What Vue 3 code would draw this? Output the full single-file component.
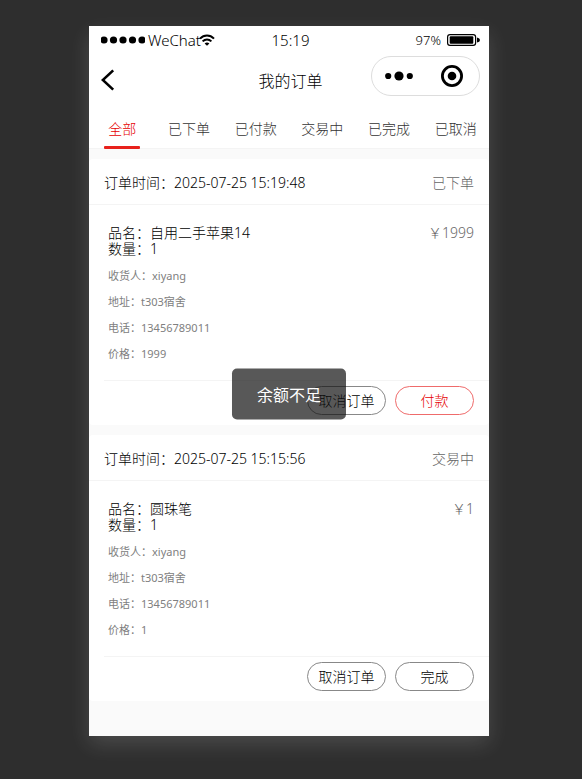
<script setup>
import { ref } from 'vue'

const tabs = ['全部', '已下单', '已付款', '交易中', '已完成', '已取消']
const active = ref(0)

const orders = [
  {
    time: '2025-07-25 15:19:48',
    status: '已下单',
    name: '自用二手苹果14',
    count: 1,
    price: '1999',
    receiver: 'xiyang',
    address: 't303宿舍',
    phone: '13456789011',
    action: '付款',
    primary: true
  },
  {
    time: '2025-07-25 15:15:56',
    status: '交易中',
    name: '圆珠笔',
    count: 1,
    price: '1',
    receiver: 'xiyang',
    address: 't303宿舍',
    phone: '13456789011',
    action: '完成',
    primary: false
  }
]
</script>

<template>
  <div class="stage">
    <main class="phone">
      <div class="status-bar">
        <div class="carrier">
          <svg class="signal" width="44" height="8" viewBox="0 0 44 8" aria-hidden="true">
            <circle cx="3" cy="4" r="3.6" />
            <circle cx="12.5" cy="4" r="3.6" />
            <circle cx="22" cy="4" r="3.6" />
            <circle cx="31.5" cy="4" r="3.6" />
            <circle cx="41" cy="4" r="3.6" />
          </svg>
          <span>WeChat</span>
          <svg class="wifi" width="16" height="12" viewBox="0 0 16 12" aria-hidden="true">
            <path d="M1 4.6C5 .4 11 .4 15 4.6M3.6 7.4C6.2 4.8 9.8 4.8 12.4 7.4" />
            <path class="wifi-dot" d="M8 11.8L5.6 9.4Q8 7.4 10.4 9.4Z" />
          </svg>
        </div>
        <time class="clock">15:19</time>
        <div class="power">
          <span>97%</span>
          <svg width="33" height="12" viewBox="0 0 33 12" aria-hidden="true">
            <rect class="battery-case" x=".6" y=".6" width="28" height="10.8" rx="2.4" />
            <rect x="2.7" y="2.2" width="23.6" height="7.6" rx="1" />
            <path d="M30 3.4Q33 4 33 6T30 8.6Z" />
          </svg>
        </div>
      </div>

      <header class="nav">
        <button class="back" type="button" aria-label="返回">
          <svg width="14" height="22" viewBox="0 0 14 22" aria-hidden="true">
            <path d="M12.2 1.4L1.8 11L12.2 20.6" />
          </svg>
        </button>
        <h1>我的订单</h1>
        <div class="capsule">
          <button type="button" aria-label="更多">
            <svg width="28" height="10" viewBox="0 0 28 10" aria-hidden="true">
              <circle cx="3.2" cy="5" r="3.1" />
              <circle cx="14" cy="5" r="4.6" />
              <circle cx="24.8" cy="5" r="3.1" />
            </svg>
          </button>
          <button type="button" aria-label="关闭">
            <svg width="22" height="22" viewBox="0 0 22 22" aria-hidden="true">
              <circle class="ring" cx="11" cy="11" r="9.6" />
              <circle cx="11" cy="11" r="4.3" />
            </svg>
          </button>
        </div>
      </header>

      <nav class="tabs">
        <button
          v-for="(tab, i) in tabs"
          :key="tab"
          type="button"
          :class="{ active: active === i }"
          @click="active = i"
        >{{ tab }}</button>
      </nav>

      <section class="orders">
        <article v-for="order in orders" :key="order.time" class="card">
          <div class="card-head">
            <span>订单时间：{{ order.time }}</span>
            <span class="muted">{{ order.status }}</span>
          </div>
          <div class="card-body">
            <div>
              <p class="main-line">品名：{{ order.name }}</p>
              <p class="main-line">数量：{{ order.count }}</p>
              <div class="details">
                <p>收货人：{{ order.receiver }}</p>
                <p>地址：{{ order.address }}</p>
                <p>电话：{{ order.phone }}</p>
                <p>价格：{{ order.price }}</p>
              </div>
            </div>
            <span class="amount">￥{{ order.price }}</span>
          </div>
          <div class="card-foot">
            <button type="button">取消订单</button>
            <button type="button" :class="{ primary: order.primary }">{{ order.action }}</button>
          </div>
        </article>
      </section>

      <div class="toast" role="status">余额不足</div>
    </main>
  </div>
</template>

<style>
body {
  background: #2e2e2e;
}
</style>

<style scoped>
.stage {
  box-sizing: border-box;
  min-height: 100vh;
  padding: 26px 93px 43px 89px;
  display: flex;
  font-family: "Noto Sans", "Noto Sans CJK SC", sans-serif;
  font-size: 14px;
  font-weight: 300;
  color: #000;
}
.phone {
  position: relative;
  flex: 1;
  min-width: 0;
  background: #fafafa;
  box-shadow: 0 8px 20px rgba(255, 255, 255, 0.14);
}
button {
  border: 0;
  padding: 0;
  background: none;
  font: inherit;
  color: inherit;
  cursor: pointer;
}
svg {
  display: block;
}
p,
h1 {
  margin: 0;
}
.status-bar {
  display: grid;
  grid-template-columns: 1fr auto 1fr;
  align-items: center;
  height: 28px;
  padding: 0 9px 0 12px;
  background: #fff;
}
.carrier,
.power {
  display: flex;
  align-items: center;
}
.carrier {
  gap: 3px;
  font-size: 15px;
}
.wifi {
  margin-left: -5px;
  fill: none;
  stroke: #000;
  stroke-width: 2;
}
.wifi-dot {
  fill: #000;
  stroke: none;
}
.clock {
  font-size: 15px;
}
.power {
  justify-content: flex-end;
  gap: 6px;
  font-size: 13px;
}
.battery-case {
  fill: none;
  stroke: #000;
  stroke-width: 1.2;
}
.nav {
  display: grid;
  grid-template-columns: 1fr auto 1fr;
  align-items: center;
  height: 52px;
  padding: 0 9px 2px 12px;
  background: #fff;
}
.back {
  justify-self: start;
}
.back path {
  fill: none;
  stroke: #000;
  stroke-width: 2.6;
}
.nav h1 {
  font-size: 16px;
  font-weight: 300;
}
.capsule {
  box-sizing: border-box;
  justify-self: end;
  align-self: start;
  display: flex;
  width: 109px;
  height: 40px;
  margin-top: 2px;
  border: 1px solid #ddd;
  border-radius: 20px;
}
.capsule button {
  flex: 1;
  display: flex;
  align-items: center;
  justify-content: center;
}
.ring {
  fill: none;
  stroke: #000;
  stroke-width: 2.8;
}
.tabs {
  display: flex;
  height: 40px;
  background: #fff;
  border-bottom: 1px solid #f4f4f4;
  color: #333;
}
.tabs button {
  position: relative;
  flex: 1;
}
.tabs .active {
  color: #e60000;
}
.tabs .active::after {
  content: "";
  position: absolute;
  left: 50%;
  bottom: -1px;
  width: 36px;
  height: 3px;
  margin-left: -18px;
  border-radius: 1px;
  background: #e8211c;
}
.orders {
  display: flex;
  flex-direction: column;
  gap: 10px;
  padding-top: 10px;
}
.card {
  background: #fff;
  border-radius: 4px;
}
.card-head {
  display: flex;
  align-items: center;
  justify-content: space-between;
  height: 45px;
  padding: 0 15px;
  border-bottom: 1px solid #f4f4f4;
}
.muted {
  color: #666;
}
.card-body {
  display: flex;
  justify-content: space-between;
  padding: 20px 15px 13px 19px;
}
.main-line {
  line-height: 16px;
}
.details {
  margin-top: 6px;
  font-size: 11px;
  font-weight: 400;
  line-height: 26px;
  color: #808080;
}
.amount {
  line-height: 16px;
  color: #666;
}
.card-foot {
  display: flex;
  justify-content: flex-end;
  gap: 9px;
  margin-left: 15px;
  padding: 5px 15px 10px 0;
  border-top: 1px solid #f4f4f4;
}
.card-foot button {
  box-sizing: border-box;
  width: 79px;
  height: 29px;
  padding-bottom: 2px;
  border: 1px solid #888;
  border-radius: 15px;
}
.card-foot .primary {
  border-color: #ef6b6b;
  color: #e60000;
}
.toast {
  position: absolute;
  left: 50%;
  top: 368px;
  transform: translate(-50%, -50%);
  padding: 14px 25px 12px;
  border-radius: 5px;
  background: rgba(17, 17, 17, 0.7);
  color: #fff;
  font-size: 16px;
  font-weight: 400;
  line-height: 25px;
  white-space: nowrap;
}
</style>
